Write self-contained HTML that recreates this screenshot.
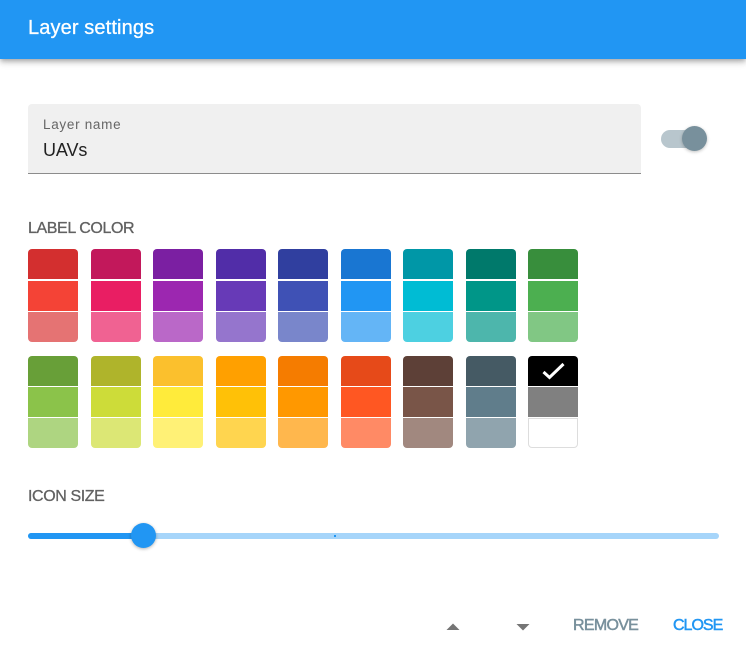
<!DOCTYPE html>
<html>
<head>
<meta charset="utf-8">
<style>
html,body{margin:0;padding:0;background:#fff;}
body{width:746px;height:666px;position:relative;overflow:hidden;font-family:"Liberation Sans",sans-serif;}
div,span{position:absolute;white-space:nowrap;}
.s{width:50px;}
</style>
</head>
<body>
<div style="left:0;top:0;width:746px;height:59px;background:#2196f3;box-shadow:0 2px 4px -1px rgba(0,0,0,.2),0 4px 5px 0 rgba(0,0,0,.14),0 1px 10px 0 rgba(0,0,0,.12);"></div>
<div style="left:28px;top:17px;font-size:20px;line-height:22px;color:#fff;letter-spacing:.12px;-webkit-text-stroke:.3px #fff;">Layer settings</div>

<div style="left:28px;top:104px;width:613px;height:69px;background:#f0f0f0;border-radius:4px 4px 0 0;border-bottom:1px solid #8c8c8c;"></div>
<div style="left:43px;top:117px;font-size:13.5px;line-height:16px;color:#666;letter-spacing:.7px;">Layer name</div>
<div style="left:43px;top:139px;font-size:18px;line-height:23px;color:#222;letter-spacing:-.1px;">UAVs</div>

<div style="left:661px;top:130px;width:40px;height:18px;border-radius:9px;background:#b8c6cd;"></div>
<div style="left:682px;top:126px;width:25px;height:25px;border-radius:50%;background:#78909c;box-shadow:0 1px 3px rgba(0,0,0,.25);"></div>

<div style="left:28px;top:219px;font-size:16px;line-height:20px;color:#616161;letter-spacing:-.4px;-webkit-text-stroke:.3px #616161;">LABEL COLOR</div>

<!-- Row group 1 -->
<div class="s" style="left:28px;top:249px;height:30px;background:#d32f2f;border-radius:4px 4px 0 0;"></div>
<div class="s" style="left:28px;top:281px;height:30px;background:#f44336;"></div>
<div class="s" style="left:28px;top:312px;height:30px;background:#e57373;border-radius:0 0 4px 4px;"></div>

<div class="s" style="left:91px;top:249px;height:30px;background:#c2185b;border-radius:4px 4px 0 0;"></div>
<div class="s" style="left:91px;top:281px;height:30px;background:#e91e63;"></div>
<div class="s" style="left:91px;top:312px;height:30px;background:#f06292;border-radius:0 0 4px 4px;"></div>

<div class="s" style="left:153px;top:249px;height:30px;background:#7b1fa2;border-radius:4px 4px 0 0;"></div>
<div class="s" style="left:153px;top:281px;height:30px;background:#9c27b0;"></div>
<div class="s" style="left:153px;top:312px;height:30px;background:#ba68c8;border-radius:0 0 4px 4px;"></div>

<div class="s" style="left:216px;top:249px;height:30px;background:#512da8;border-radius:4px 4px 0 0;"></div>
<div class="s" style="left:216px;top:281px;height:30px;background:#673ab7;"></div>
<div class="s" style="left:216px;top:312px;height:30px;background:#9575cd;border-radius:0 0 4px 4px;"></div>

<div class="s" style="left:278px;top:249px;height:30px;background:#303f9f;border-radius:4px 4px 0 0;"></div>
<div class="s" style="left:278px;top:281px;height:30px;background:#3f51b5;"></div>
<div class="s" style="left:278px;top:312px;height:30px;background:#7986cb;border-radius:0 0 4px 4px;"></div>

<div class="s" style="left:341px;top:249px;height:30px;background:#1976d2;border-radius:4px 4px 0 0;"></div>
<div class="s" style="left:341px;top:281px;height:30px;background:#2196f3;"></div>
<div class="s" style="left:341px;top:312px;height:30px;background:#64b5f6;border-radius:0 0 4px 4px;"></div>

<div class="s" style="left:403px;top:249px;height:30px;background:#0097a7;border-radius:4px 4px 0 0;"></div>
<div class="s" style="left:403px;top:281px;height:30px;background:#00bcd4;"></div>
<div class="s" style="left:403px;top:312px;height:30px;background:#4dd0e1;border-radius:0 0 4px 4px;"></div>

<div class="s" style="left:466px;top:249px;height:30px;background:#00796b;border-radius:4px 4px 0 0;"></div>
<div class="s" style="left:466px;top:281px;height:30px;background:#009688;"></div>
<div class="s" style="left:466px;top:312px;height:30px;background:#4db6ac;border-radius:0 0 4px 4px;"></div>

<div class="s" style="left:528px;top:249px;height:30px;background:#388e3c;border-radius:4px 4px 0 0;"></div>
<div class="s" style="left:528px;top:281px;height:30px;background:#4caf50;"></div>
<div class="s" style="left:528px;top:312px;height:30px;background:#81c784;border-radius:0 0 4px 4px;"></div>

<!-- Row group 2 -->
<div class="s" style="left:28px;top:356px;height:30px;background:#689f38;border-radius:4px 4px 0 0;"></div>
<div class="s" style="left:28px;top:387px;height:30px;background:#8bc34a;"></div>
<div class="s" style="left:28px;top:418px;height:30px;background:#aed581;border-radius:0 0 4px 4px;"></div>

<div class="s" style="left:91px;top:356px;height:30px;background:#afb42b;border-radius:4px 4px 0 0;"></div>
<div class="s" style="left:91px;top:387px;height:30px;background:#cddc39;"></div>
<div class="s" style="left:91px;top:418px;height:30px;background:#dce775;border-radius:0 0 4px 4px;"></div>

<div class="s" style="left:153px;top:356px;height:30px;background:#fbc02d;border-radius:4px 4px 0 0;"></div>
<div class="s" style="left:153px;top:387px;height:30px;background:#ffeb3b;"></div>
<div class="s" style="left:153px;top:418px;height:30px;background:#fff176;border-radius:0 0 4px 4px;"></div>

<div class="s" style="left:216px;top:356px;height:30px;background:#ffa000;border-radius:4px 4px 0 0;"></div>
<div class="s" style="left:216px;top:387px;height:30px;background:#ffc107;"></div>
<div class="s" style="left:216px;top:418px;height:30px;background:#ffd54f;border-radius:0 0 4px 4px;"></div>

<div class="s" style="left:278px;top:356px;height:30px;background:#f57c00;border-radius:4px 4px 0 0;"></div>
<div class="s" style="left:278px;top:387px;height:30px;background:#ff9800;"></div>
<div class="s" style="left:278px;top:418px;height:30px;background:#ffb74d;border-radius:0 0 4px 4px;"></div>

<div class="s" style="left:341px;top:356px;height:30px;background:#e64a19;border-radius:4px 4px 0 0;"></div>
<div class="s" style="left:341px;top:387px;height:30px;background:#ff5722;"></div>
<div class="s" style="left:341px;top:418px;height:30px;background:#ff8a65;border-radius:0 0 4px 4px;"></div>

<div class="s" style="left:403px;top:356px;height:30px;background:#5d4037;border-radius:4px 4px 0 0;"></div>
<div class="s" style="left:403px;top:387px;height:30px;background:#795548;"></div>
<div class="s" style="left:403px;top:418px;height:30px;background:#a1887f;border-radius:0 0 4px 4px;"></div>

<div class="s" style="left:466px;top:356px;height:30px;background:#455a64;border-radius:4px 4px 0 0;"></div>
<div class="s" style="left:466px;top:387px;height:30px;background:#607d8b;"></div>
<div class="s" style="left:466px;top:418px;height:30px;background:#90a4ae;border-radius:0 0 4px 4px;"></div>

<div class="s" style="left:528px;top:356px;height:30px;background:#000;border-radius:4px 4px 0 0;"></div>
<div class="s" style="left:528px;top:387px;height:30px;background:#808080;"></div>
<div class="s" style="left:528px;top:418px;width:48px;height:28px;background:#fff;border:1px solid #ddd;border-radius:0 0 4px 4px;"></div>
<svg style="position:absolute;left:541px;top:361px;" width="24" height="20" viewBox="0 0 24 20"><path d="M2.5 11 L8.5 16.5 L22.5 3" fill="none" stroke="#fff" stroke-width="3"/></svg>

<div style="left:28px;top:487px;font-size:16px;line-height:20px;color:#616161;letter-spacing:-.4px;-webkit-text-stroke:.3px #616161;">ICON SIZE</div>

<!-- Slider -->
<div style="left:28px;top:533px;width:691px;height:6px;border-radius:3px;background:#a6d5fa;"></div>
<div style="left:28px;top:533px;width:115px;height:6px;border-radius:3px 0 0 3px;background:#2196f3;"></div>
<div style="left:334px;top:535px;width:2px;height:2px;background:#2196f3;"></div>
<div style="left:131px;top:523px;width:25px;height:25px;border-radius:50%;background:#2196f3;box-shadow:0 1px 3px rgba(0,0,0,.3);"></div>

<!-- Footer -->
<svg style="position:absolute;left:446px;top:622px;" width="14" height="9" viewBox="0 0 14 9"><path d="M0.5 8 L7 1.5 L13.5 8 Z" fill="#757575"/></svg>
<svg style="position:absolute;left:516px;top:623px;" width="14" height="9" viewBox="0 0 14 9"><path d="M0.5 1 L13.5 1 L7 7.5 Z" fill="#757575"/></svg>
<div style="left:573px;top:616px;font-size:16px;line-height:20px;color:#78909c;letter-spacing:-.7px;-webkit-text-stroke:.5px #78909c;">REMOVE</div>
<div style="left:673px;top:616px;font-size:16px;line-height:20px;color:#2196f3;letter-spacing:-1px;-webkit-text-stroke:.5px #2196f3;">CLOSE</div>
</body>
</html>
